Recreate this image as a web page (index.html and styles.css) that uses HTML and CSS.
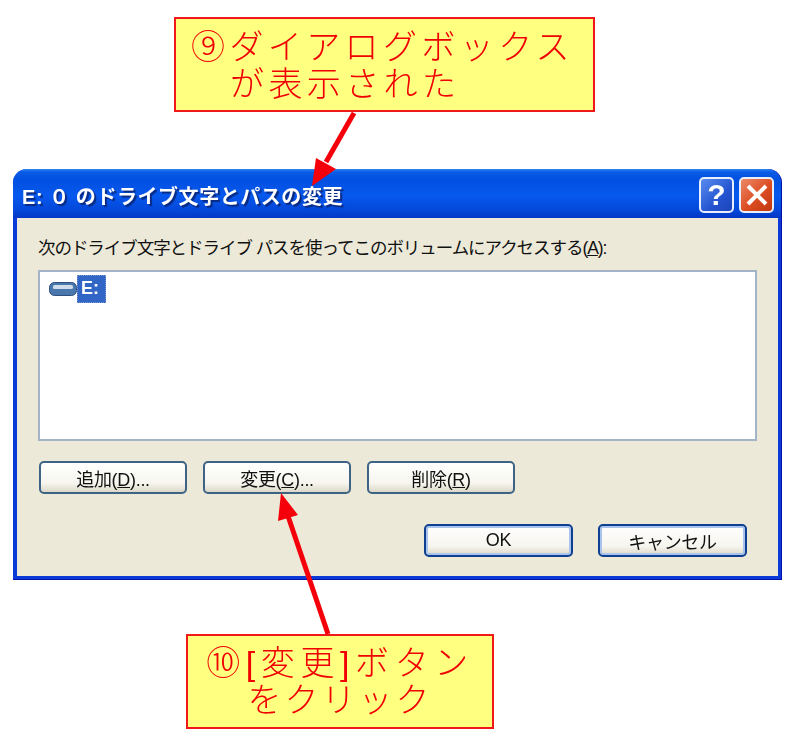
FILE: index.html
```html
<!DOCTYPE html>
<html lang="ja">
<head>
  <meta charset="UTF-8">
  <meta name="viewport" content="width=device-width, initial-scale=1.0">
  <title>ドライブ文字とパスの変更</title>
  <link rel="stylesheet" href="styles.css">
</head>
<body>
  <div class="page">
    <div class="callout callout-top">
      <p class="callout-line first">⑨ダイアログボックス</p>
      <p class="callout-line second">が表示された</p>
    </div>

    <div class="window">
      <div class="titlebar">
        <span class="title">E: ０ のドライブ文字とパスの変更</span>
        <div class="title-buttons">
          <button class="title-btn help">?</button>
          <button class="title-btn close" aria-label="閉じる">
            <svg width="24" height="24" viewBox="0 0 24 24"><path d="M3 3 L21 21 M21 3 L3 21" stroke="#fff" stroke-width="4" fill="none"/></svg>
          </button>
        </div>
      </div>
      <div class="client">
        <p class="label">次のドライブ文字とドライブ パスを使ってこのボリュームにアクセスする(<u>A</u>):</p>
        <div class="list">
          <div class="list-item">
            <svg class="drive" width="28" height="14" viewBox="0 0 28 14">
              <rect x="0.5" y="0.5" width="27" height="13" rx="5" fill="#4a78ad" stroke="#2c4f80"/>
              <rect x="4" y="3" width="20" height="4" rx="1.5" fill="#cfdcec"/>
            </svg>
            <span class="drive-name">E:</span>
          </div>
        </div>
        <div class="row">
          <button class="btn">追加(<u>D</u>)...</button>
          <button class="btn">変更(<u>C</u>)...</button>
          <button class="btn">削除(<u>R</u>)</button>
        </div>
        <div class="row row-end">
          <button class="btn btn-default">OK</button>
          <button class="btn btn-default">キャンセル</button>
        </div>
      </div>
    </div>

    <div class="callout callout-bottom">
      <p class="callout-line first">⑩[変更]ボタン</p>
      <p class="callout-line">をクリック</p>
    </div>

    <svg class="arrows" width="800" height="745" viewBox="0 0 800 745">
      <path d="M354 113 L326 162" stroke="#f5000a" stroke-width="5" fill="none"/>
      <path d="M312 186 L316 158 L336 169 Z" fill="#f5000a"/>
      <path d="M328 634 L288 516" stroke="#f5000a" stroke-width="5" fill="none"/>
      <path d="M281 493 L278 521 L298 515 Z" fill="#f5000a"/>
    </svg>
  </div>
</body>
</html>
```

FILE: styles.css
```css
body {
  margin: 0;
  background-color: #ffffff;
  font-family: "Liberation Sans", "Noto Sans CJK JP", sans-serif;
}
p {
  margin: 0;
}
.page {
  position: relative;
  width: 800px;
  height: 745px;
  padding-top: 17px;
  box-sizing: border-box;
  overflow: hidden;
  filter: blur(0.5px);
}
.arrows {
  position: absolute;
  top: 0;
  left: 0;
}

/* callouts */
.callout {
  box-sizing: border-box;
  height: 95px;
  border: 2px solid #f01818;
  background-color: #ffff80;
  color: #f00000;
  font-size: 34px;
  font-weight: 300;
  line-height: 37px;
  white-space: nowrap;
}
.callout-top {
  width: 421px;
  margin-left: 174px;
  padding: 10px 0 0 15px;
  letter-spacing: 4.4px;
}
.callout-top .second {
  padding-left: 39px;
}
.callout-bottom {
  width: 308px;
  margin-left: 186px;
  margin-top: 54px;
  padding-top: 9px;
  text-align: center;
  letter-spacing: 3px;
}
.callout-bottom .first {
  letter-spacing: 5.6px;
}

/* dialog window */
.window {
  box-sizing: border-box;
  width: 769px;
  height: 411px;
  margin: 57px 0 0 13px;
  border-radius: 14px 14px 0 0;
  background-color: #0a3ad8;
  border-right: 1px solid #0010a8;
  border-bottom: 1px solid #0010a8;
  display: flex;
  flex-direction: column;
}
.titlebar {
  height: 49px;
  flex-shrink: 0;
  display: flex;
  align-items: center;
  justify-content: space-between;
  padding: 3px 7px 0 9px;
  box-sizing: border-box;
  border-radius: 14px 14px 0 0;
  background: linear-gradient(#2f86f2 0, #0a5de6 6%, #0250e0 20%, #0758ee 55%, #0347d8 85%, #0336c4 100%);
}
.title {
  color: #ffffff;
  font-size: 20px;
  font-weight: bold;
  letter-spacing: 0.55px;
  text-shadow: 2px 2px 1px #0a2a80;
  white-space: nowrap;
}
.title-buttons {
  display: flex;
  gap: 5px;
}
.title-btn {
  width: 35px;
  height: 36px;
  padding: 0;
  border: 2px solid #e8eefc;
  border-radius: 5px;
  color: #ffffff;
  font-family: "Liberation Sans", sans-serif;
  font-size: 30px;
  font-weight: bold;
  line-height: 30px;
  display: flex;
  align-items: center;
  justify-content: center;
}
.help {
  background: linear-gradient(135deg, #5a8cf0, #2454d0 60%, #1c44b8);
}
.close {
  background: linear-gradient(135deg, #ec8a68, #dc4c22 55%, #c03810);
}
.client {
  flex: 1;
  margin: 0 3px 3px 4px;
  padding: 18px 21px 0;
  background-color: #ece9d8;
  color: #111111;
}
.label {
  height: 24px;
  margin-bottom: 10px;
  font-size: 17.5px;
  line-height: 24px;
  letter-spacing: -1.05px;
  white-space: nowrap;
}
.list {
  box-sizing: border-box;
  height: 171px;
  margin-bottom: 20px;
  padding: 3px 9px;
  border: 2px solid #a3b4c6;
  background-color: #ffffff;
}
.list-item {
  display: flex;
  align-items: center;
}
.drive-name {
  box-sizing: border-box;
  width: 29px;
  height: 28px;
  padding-left: 3px;
  background-color: #3166c6;
  border: 1px dotted #8098c8;
  color: #ffffff;
  font-size: 18px;
  font-weight: bold;
  line-height: 24px;
}

/* buttons */
.row {
  display: flex;
  gap: 16px;
  margin: 0 0 30px 1px;
}
.row-end {
  justify-content: flex-end;
  gap: 25px;
  margin: 0 10px 0 0;
}
.btn {
  box-sizing: border-box;
  width: 148px;
  height: 33px;
  padding: 0;
  border: 2px solid #3f6384;
  border-radius: 5px;
  background: linear-gradient(#ffffff, #f6f5ee 70%, #dcd8c8);
  color: #111111;
  font-family: inherit;
  font-size: 18px;
  letter-spacing: -0.3px;
}
.btn-default {
  width: 149px;
  border-color: #0f3f90;
  box-shadow: inset 0 0 0 2px #a8c4ec;
}
```
